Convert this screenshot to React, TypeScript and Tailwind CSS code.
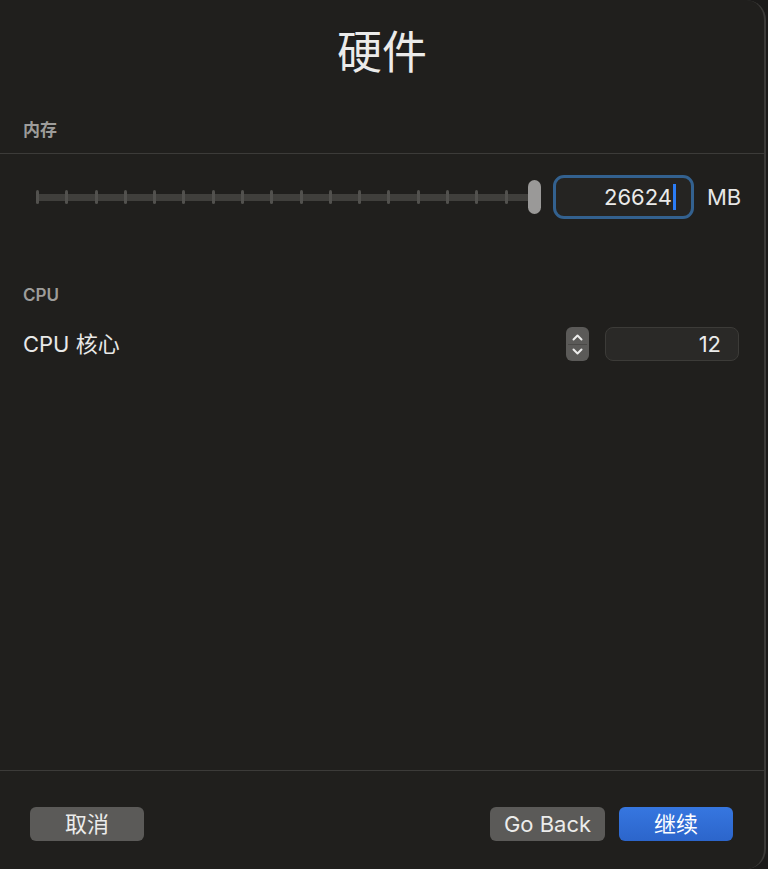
import React from "react"

const font = { fontFamily: 'Inter, "Noto Sans CJK SC", sans-serif' }

function SectionHeader({ label }: { label: string }) {
    return <div className="px-[23px] text-[17px] leading-[20px] font-semibold text-[#9d9c9a]">{label}</div>
}

function MemorySlider() {
    const ticks = Array.from({ length: 18 })
    return (
        <div className="relative ml-[36px] w-[505px] h-[44px] flex items-center">
            <div className="absolute left-0 right-[8px] h-[7px] rounded-[2px] bg-[#403f3c]" />
            <div className="absolute left-0 w-[501px] flex justify-between items-center">
                {ticks.map((_, i) => (
                    <div key={i} className="w-[3px] h-[14px] rounded-full bg-[#52514e]" />
                ))}
            </div>
            <div className="absolute right-0 w-[13px] h-[34px] rounded-full bg-[#9a9998]" />
        </div>
    )
}

function Stepper() {
    return (
        <div className="w-[23px] h-[34px] rounded-[6px] bg-[#5b5a58] flex flex-col items-center justify-center">
            <svg width="13" height="9" viewBox="0 0 13 9" className="mb-[2px]">
                <path d="M2.5 6.5 L6.5 2.5 L10.5 6.5" fill="none" stroke="#ececeb" strokeWidth="2" strokeLinecap="round" strokeLinejoin="round" />
            </svg>
            <div className="w-[19px] h-px bg-[#4a4947]" />
            <svg width="13" height="9" viewBox="0 0 13 9" className="mt-[2px]">
                <path d="M2.5 2.5 L6.5 6.5 L10.5 2.5" fill="none" stroke="#ececeb" strokeWidth="2" strokeLinecap="round" strokeLinejoin="round" />
            </svg>
        </div>
    )
}

export default function App() {
    return (
        <div className="w-[768px] h-[869px] bg-[#1b1a19]" style={font}>
            <div className="w-[766px] h-[869px] flex flex-col bg-[#201f1d] border-r-2 border-[#3b3a38] rounded-r-[20px] text-[#e6e6e5]">
                <h1 className="pt-[28px] text-center text-[45px] leading-[50px] font-normal text-[#ebebea]">硬件</h1>

                <div className="mt-[42px]">
                    <SectionHeader label="内存" />
                </div>
                <div className="mt-[13px] h-px bg-[#3c3b39]" />

                {/* memory row */}
                <div className="mt-[21px] flex items-center">
                    <MemorySlider />
                    <div className="ml-[12px] w-[141px] h-[44px] rounded-[11px] border-[3px] border-[#33618f] bg-[#252422] flex items-center justify-end pr-[15px]">
                        <span className="text-[22px] leading-none text-[#ebebea]">26624</span>
                        <span className="ml-[1px] w-[3px] h-[26px] bg-[#2b7cf5]" />
                    </div>
                    <span className="ml-[13px] text-[22px] text-[#e6e6e5]">MB</span>
                </div>

                <div className="mt-[66px]">
                    <SectionHeader label="CPU" />
                </div>

                {/* cpu row */}
                <div className="mt-[22px] h-[34px] pl-[23px] pr-[25px] flex items-center">
                    <span className="text-[22px] text-[#e9e9e8]">CPU 核心</span>
                    <div className="ml-auto flex items-center gap-[16px]">
                        <Stepper />
                        <div className="w-[134px] h-[34px] rounded-[8px] border border-[#3c3b38] bg-[#2a2927] flex items-center justify-end pr-[17px]">
                            <span className="text-[22px] text-[#ebebea]">12</span>
                        </div>
                    </div>
                </div>

                <div className="flex-1" />
                <div className="h-px bg-[#3c3b39]" />

                {/* footer buttons */}
                <div className="pt-[36px] pb-[28px] pl-[30px] pr-[31px] flex items-center">
                    <button className="w-[114px] h-[34px] rounded-[6px] bg-[#5b5a58] text-[22px] text-[#ececeb]">取消</button>
                    <button className="ml-auto w-[115px] h-[34px] rounded-[6px] bg-[#5b5a58] text-[22px] text-[#ececeb]">Go Back</button>
                    <button className="ml-[14px] w-[114px] h-[34px] rounded-[6px] bg-gradient-to-b from-[#3676e0] to-[#2c65cb] text-[22px] text-white">继续</button>
                </div>
            </div>
        </div>
    )
}
